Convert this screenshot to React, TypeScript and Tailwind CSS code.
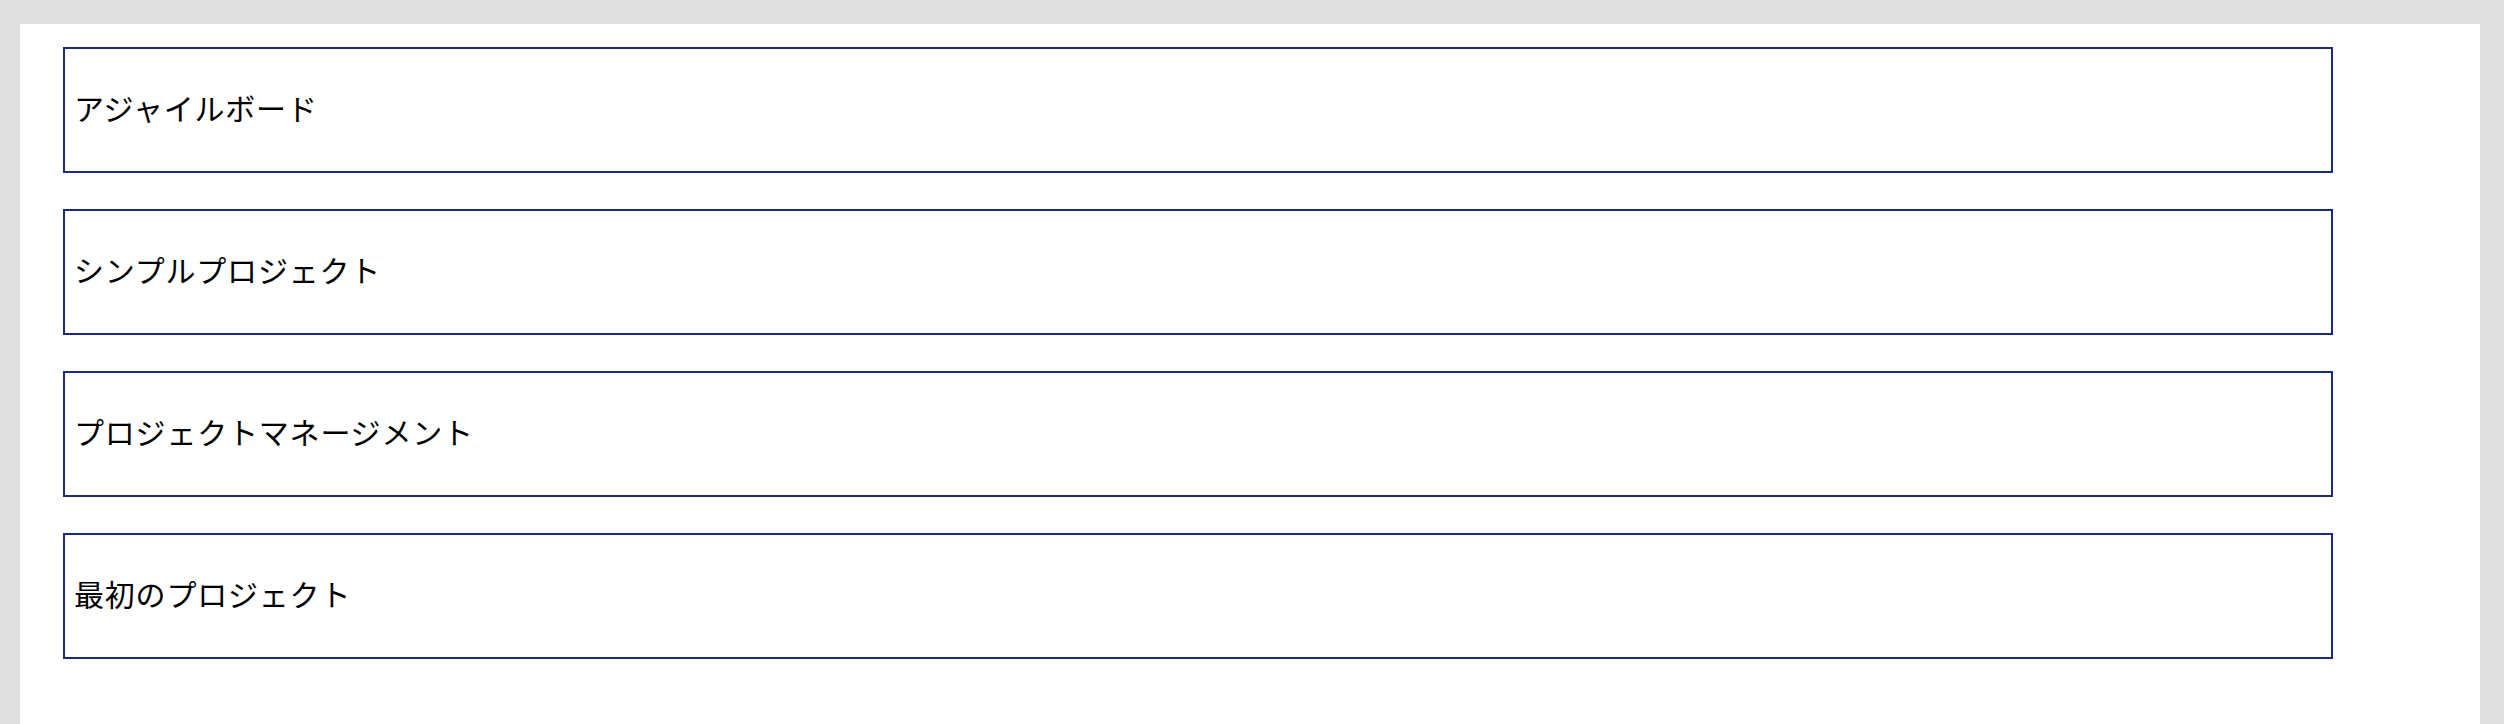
const projects = ['アジャイルボード', 'シンプルプロジェクト', 'プロジェクトマネージメント', '最初のプロジェクト'];

export default function App() {
    return (
        <div className="min-h-[724px] bg-[#e0e0e0] pt-[24px] pl-[20px] pr-[24px]">
            <div
                className="bg-white min-h-[700px] pt-[23px] pl-[43px]"
                style={{ fontFamily: '"Noto Sans CJK JP", "Noto Sans", sans-serif' }}
            >
                <div className="flex flex-col gap-[36px]">
                    {projects.map((name) => (
                        <div
                            key={name}
                            className="w-[2270px] h-[126px] border-2 border-[#1c2a7e] flex items-center pl-[9px] pb-[5px] text-[30px] tracking-[0.8px] text-black"
                        >
                            {name}
                        </div>
                    ))}
                </div>
            </div>
        </div>
    );
}
